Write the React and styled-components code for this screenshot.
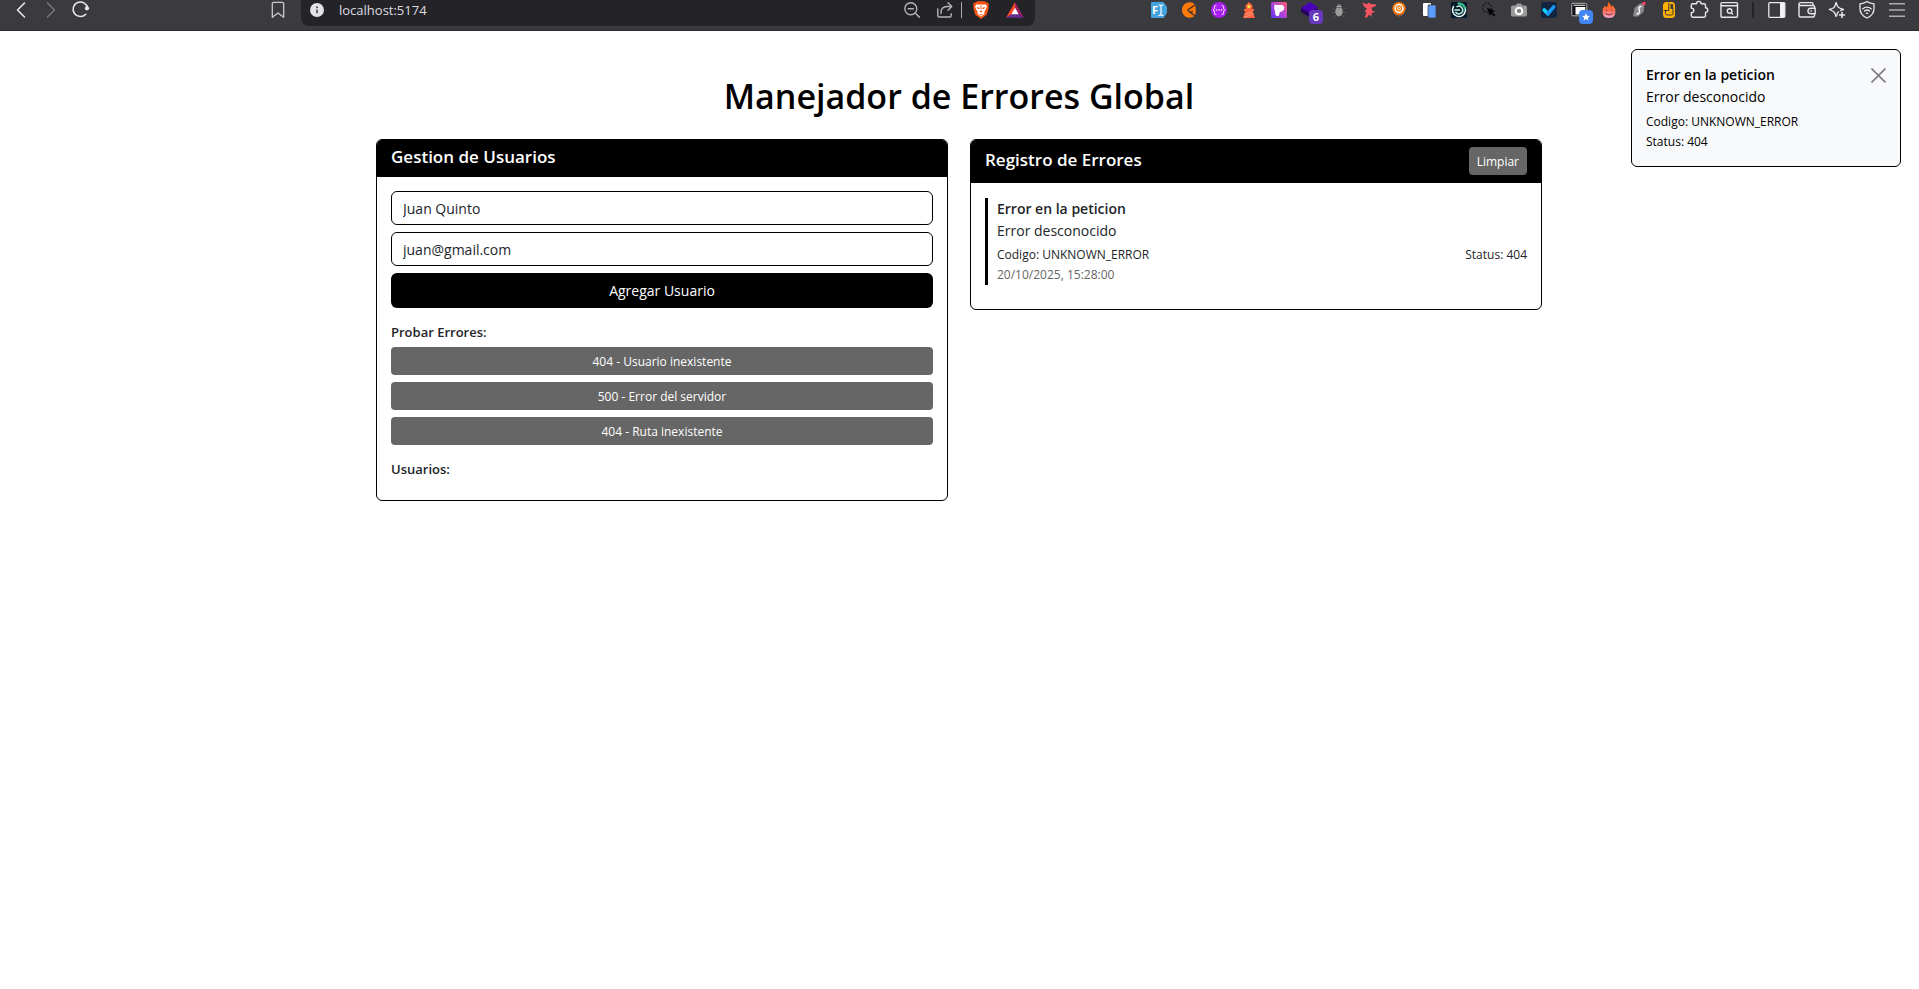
import React, { useState } from "react";
import styled, { createGlobalStyle } from "styled-components";

const GlobalStyle = createGlobalStyle`
  *, *::before, *::after { box-sizing: border-box; }
  body {
    margin: 0;
    background: #fff;
    color: #212529;
    font-family: "Segoe UI", "Open Sans", "Noto Sans", sans-serif;
    font-size: 14px;
    line-height: 22px;
  }
  button, input { font-family: inherit; }
  h1, h2, h3, p { margin: 0; }
`;

/* ---------- browser toolbar ---------- */

const Toolbar = styled.header`
  display: flex;
  align-items: flex-start;
  height: 31px;
  padding: 0 7px 0 6px;
  background: #3b3a3f;
  border-bottom: 1px solid #2c2b30;
`;

const ToolGroup = styled.div`
  display: flex;
  align-items: center;
  height: 20px;
  flex: none;
`;

const Spacer = styled.div`
  flex: ${(p) => p.$grow} 1 0;
`;

const ToolButton = styled.button`
  position: relative;
  display: flex;
  align-items: center;
  justify-content: center;
  width: ${(p) => p.$width || 30}px;
  height: 20px;
  padding: 0;
  border: 0;
  background: none;
  color: ${(p) => p.$color || "#e8e8ea"};
  svg { display: block; flex: none; overflow: visible; }
`;

const Badge = styled.span`
  position: absolute;
  left: ${(p) => p.$left}px;
  top: 10px;
  display: flex;
  align-items: center;
  justify-content: center;
  width: 14px;
  height: 14px;
  border-radius: 4px;
  background: ${(p) => p.$bg};
  color: #fff;
  font-size: 11px;
  font-weight: 700;
  line-height: 14px;
`;

const ToolDivider = styled.div`
  width: 2px;
  height: 16px;
  margin: 0 8px;
  background: #242328;
`;

const AddressBar = styled.div`
  display: flex;
  align-items: center;
  flex: 728 1 0;
  min-width: 0;
  height: 26px;
  margin-left: 8px;
  padding: 0 5px 6px 1px;
  border-radius: 0 0 8px 8px;
  background: #242328;
`;

const AddressInput = styled.input`
  flex: 1;
  min-width: 0;
  height: 20px;
  padding: 0 7px;
  border: 0;
  outline: 0;
  background: none;
  color: #dcdce0;
  font-size: 13px;
`;

const AddressDivider = styled.div`
  width: 1px;
  height: 16px;
  background: #a9a9ad;
`;

const Icon = ({ children, size = 16 }) => (
  <svg width={size} height={size} viewBox="0 0 16 16" fill="none" stroke="currentColor"
    strokeWidth="1.4" strokeLinecap="round" strokeLinejoin="round" aria-hidden="true">
    {children}
  </svg>
);

const BackIcon = () => <Icon><path d="M11.5 1 4.5 8l7 7" strokeWidth="1.6" /></Icon>;
const ForwardIcon = () => <Icon><path d="M4.5 1l7 7-7 7" /></Icon>;
const ReloadIcon = () => (
  <Icon>
    <path d="M12.8 12.2A7.3 7.3 0 1 1 14.6 6" strokeWidth="1.5" />
    <circle cx="14" cy="6.3" r="2.1" fill="currentColor" stroke="none" />
  </Icon>
);
const BookmarkIcon = () => <Icon><path d="M2.3 15.3V1.8Q2.3.3 3.8.3h8.4q1.5 0 1.5 1.5v13.5L8 11z" strokeWidth="1.3" /></Icon>;
const InfoIcon = () => (
  <Icon size={14}>
    <circle cx="8" cy="8" r="8" fill="#e3e3e6" stroke="none" />
    <path d="M8 7.4v4.2" stroke="#55545a" strokeWidth="2" strokeLinecap="butt" />
    <circle cx="8" cy="4.8" r="1.2" fill="#55545a" stroke="none" />
  </Icon>
);
const ZoomOutIcon = () => (
  <Icon><circle cx="6.8" cy="6.7" r="6" /><path d="M11.2 11l4.2 4.2M4.2 6.7h5.2" /></Icon>
);
const ShareIcon = () => (
  <Icon>
    <path d="M.8 7v6.5q0 1.5 1.5 1.5h10.4q1.5 0 1.5-1.5v-1.8" />
    <path d="M4 11.5V10q.3-5.2 6-5.5h4.5M11 .8l3.8 3.7L11 8.2" />
  </Icon>
);
const BraveIcon = () => (
  <svg width="16" height="18" viewBox="0 0 16 18" aria-hidden="true">
    <path d="M4.2.2h7.6l1.3 1.4 1.8-.2 1 2.4-.5 1.4.4 1.4-2.1 7.2L8 18l-5.7-4.2L.2 6.6.6 5.2.1 3.8l1-2.4 1.8.2z" fill="#fb5412" />
    <path d="M3.7 3.2l2.6.5L8 3.2l1.7.5 2.6-.5L14 5.6l-1.3 3-1.5 2.6.4 1.5L8 15.7l-3.6-3 .4-1.5-1.5-2.6L2 5.6z" fill="#fff" />
    <path d="M3.8 6l3 .7L6.3 8 4.9 8zM12.2 6l-3 .7.5 1.3 1.4 0zM6.4 10.3 8 9.5l1.6.8L8 11.5zM5.5 12.4l2.5 1.1 2.5-1.1L8 14.7zM7.6 4h.8v4.5h-.8z" fill="#fb5412" />
  </svg>
);
const BatIcon = () => (
  <svg width="18" height="16" viewBox="0 0 18 16" aria-hidden="true">
    <path d="M9 .3 0 15.7 6 12 9 6.5z" fill="#ff4724" />
    <path d="M9 .3v6.2l3.2 5.5 5.8 3.7z" fill="#9e1f63" />
    <path d="M0 15.7h18L12.2 12H5.8z" fill="#662d91" />
    <path d="M9 5.7l3.6 6.5H5.4z" fill="#fff" />
  </svg>
);
const FontIcon = () => (
  <Icon>
    <path d="M1 0h11.5L16 5v6l-3.5 5H1q-1 0-1-1V1q0-1 1-1z" fill="#43a3df" stroke="none" />
    <text x="1" y="12" fill="#fff" stroke="none" fontSize="11" fontWeight="700" fontFamily="Open Sans, sans-serif">F</text>
    <path d="M8 3q1.3 0 2 .8.7-.8 2-.8M8 13.5q1.3 0 2-.8.7.8 2 .8M10 4v8.5" stroke="#fff" strokeWidth="1.2" />
  </Icon>
);
const OrangeFaceIcon = () => (
  <Icon>
    <path d="M14 2.5A7.7 7.7 0 1 0 14 13.5Q15.5 8 14 2.5z" fill="#ff7a0a" stroke="none" />
    <path d="M13.5 3.2 6.8 8l2.5 2.5 2-1M9.3 10.5l4.2 3" stroke="#4b3326" strokeWidth="1.5" />
  </Icon>
);
const DotsIcon = () => (
  <Icon>
    <circle cx="8" cy="8" r="8" fill="#a91df0" stroke="none" />
    <path d="M5 3.5Q3.5 3.5 3.5 5v1.5L2.3 8l1.2 1.5V11q0 1.5 1.5 1.5M11 3.5q1.5 0 1.5 1.5v1.5L13.7 8l-1.2 1.5V11q0 1.5-1.5 1.5" stroke="#efcaff" strokeWidth="1.1" />
    <path d="M5.5 8h.1M8 8h.1M10.4 8h.1" stroke="#fff" strokeWidth="1.5" />
  </Icon>
);
const LighthouseIcon = () => (
  <Icon>
    <path d="M3.5 4.5 8 0l4.5 4.5zM4.8 4h6.5v4H4.8zM3 7h10v2H3zM4.5 9h7l2.5 7H2z" fill="#ff633b" stroke="none" />
    <circle cx="8" cy="4.5" r="1.7" fill="#ffe04a" stroke="none" />
    <path d="M4.5 12.3l6.5-2.5M3.5 15.3l8.7-3.4" stroke="#ff9a7d" strokeWidth="1" />
  </Icon>
);
const PIcon = () => (
  <Icon>
    <defs><linearGradient id="pgrad" x1="1" y1="0" x2="0" y2="1"><stop stopColor="#ff5f6d" /><stop offset=".5" stopColor="#b143dc" /><stop offset="1" stopColor="#5936f0" /></linearGradient></defs>
    <rect width="16" height="16" rx="1.5" fill="url(#pgrad)" stroke="none" />
    <path d="M3.5 2.5q4.5 1 7 .3 3.5 1 2.5 4.500-1 2.700-4.300 3L8 13.5q-2.5 1.3-3.5-.5L4 9.5Q2.5 6 3.5 2.500z" fill="#fff" stroke="none" />
    <path d="M5.5 5.3l2 2" stroke="#e3ceff" strokeWidth="1" />
  </Icon>
);
const CubeIcon = () => (
  <Icon>
    <path d="M9 0l7.5 5-8 6L0 6z" fill="#4a00b8" stroke="none" />
    <path d="M0 6l8.5 5v4L0 10z" fill="#24005f" stroke="none" />
    <path d="M16.5 5v4l-8 6v-4z" fill="#350089" stroke="none" />
  </Icon>
);
const BugIcon = () => (
  <Icon>
    <path d="M2 6.5l3 1.5M14 6.5 11 8M1.5 10.5H5m6 0h3.5M3 15l2.5-2M13 15l-2.5-2" stroke="#55555a" strokeWidth=".9" />
    <ellipse cx="8" cy="9.5" rx="3.6" ry="5" fill="#9b9b9b" stroke="none" />
    <circle cx="8" cy="4" r="2.3" fill="#646468" stroke="none" />
    <path d="M6 4.5q2-1 4 0" stroke="#ddd" strokeWidth=".8" />
  </Icon>
);
const RunnerIcon = () => (
  <Icon>
    <path d="M1.5.5l4 1.7L8 .5l2.2 1.7 4-.2 1 2-3.2 1-1.5 1 .8 3 3 .5-2.3 1.3-1.5.2.3 4-2.6-2.5L6 15.5H3.5l2-4.7L3.5 9.5 6 6.7 3.5 5 2 2.5z" fill="#f25462" stroke="none" />
  </Icon>
);
const DiscIcon = () => (
  <Icon>
    <path d="M2.8 12.5 8 15.5l5.2-3z" fill="#6d5039" stroke="none" />
    <circle cx="8" cy="6.5" r="6.6" fill="#f5790b" stroke="none" />
    <circle cx="8" cy="6.5" r="3.9" stroke="#fff" strokeWidth="1.5" />
    <circle cx="8" cy="6.5" r="1.5" fill="#f5790b" stroke="#ffe3c8" strokeWidth="1.2" />
  </Icon>
);
const DevicesIcon = () => (
  <Icon>
    <rect x="2" y="1" width="8" height="13" rx="1" fill="#fff" stroke="none" />
    <rect x="7" y="3" width="8" height="13" rx="1" fill="#5c9cf8" stroke="#3b3a3f" strokeWidth=".7" />
  </Icon>
);
const SpiralIcon = () => (
  <Icon>
    <rect width="16" height="16" fill="#07192a" stroke="none" />
    <path d="M2.5 4.5a6.5 6.5 0 1 0 5-3" stroke="#eafff8" strokeWidth="1.5" />
    <path d="M7.5 1.5a6.5 6.5 0 0 1 6.3 5" stroke="#24c58d" strokeWidth="1.8" />
    <path d="M4 8h4.5M6 4.7a3.8 3.8 0 1 1-1.2 5.6" stroke="#bff6e2" strokeWidth="1.5" />
  </Icon>
);
const ClickIcon = () => (
  <Icon>
    <circle cx="6" cy="5.8" r="4.5" stroke="#151518" strokeWidth="1.5" strokeDasharray="1.5 1.6" strokeLinecap="butt" />
    <path d="M6 5.8l8 3.2-2.7 1.3 3 3-1.2 1.2-3-3L8.800 14z" fill="#000" stroke="none" />
  </Icon>
);
const CameraIcon = () => (
  <Icon>
    <path d="M1.5 3.5h3L6 1.5h4l1.5 2h3q1.5 0 1.5 1.5v8q0 1.5-1.5 1.5h-13Q0 14.5 0 13V5q0-1.5 1.5-1.5z" fill="#99999b" stroke="none" />
    <circle cx="8" cy="9" r="3.3" fill="#858588" stroke="#fff" strokeWidth="2" />
  </Icon>
);
const CheckIcon = () => (
  <Icon>
    <rect width="16" height="16" rx="2" fill="#142542" stroke="none" />
    <path d="M3.2 8l3.7 3.8" stroke="#19d3ff" strokeWidth="3.6" />
    <path d="M7 11.5l5.7-6.7" stroke="#159bf8" strokeWidth="3.6" />
  </Icon>
);
const WindowIcon = () => (
  <Icon>
    <rect x=".8" y="1.3" width="15" height="12.5" rx="1" fill="#111" stroke="#b5b5b8" strokeWidth="1" />
    <path d="M2.5 2.8h11.8v1H2.5zM4.5 5h9.8v7.5H4.5z" fill="#fff" stroke="none" />
  </Icon>
);
const FlameIcon = () => (
  <Icon>
    <defs><linearGradient id="flame" x1="0" y1="0" x2="0" y2="1"><stop stopColor="#ff6a00" /><stop offset=".5" stopColor="#ff6945" /><stop offset="1" stopColor="#f6a5d1" /></linearGradient></defs>
    <path d="M7.5-.3Q9 1.5 10.5 5L12 3q.3 2 2.2 3.7 1.5 9.3-6.2 9.3T1.8 6.7Q3.3 5.5 3.5 3.5L5.5 5.5Q7.5 3 7.5-.3z" fill="url(#flame)" stroke="none" />
    <path d="M5.5 8v.5M10.5 8v.5M4.5 11.5q3.500 3 7 0" stroke="#7d2c49" strokeWidth="1" />
  </Icon>
);
const PenIcon = () => (
  <Icon>
    <path d="M2 14.5 3.5 6 9 1.5h4.5L12.5 10 7 14.5z" fill="#8b8b8e" stroke="none" />
    <path d="M10 4.5Q8 4.5 7.8 6.5q1.2 1.5.5 4-.5 1.5-2.3 1.5" stroke="#fff" strokeWidth="1.3" />
    <circle cx="13" cy="1.5" r="1.7" fill="#fb405e" stroke="none" />
  </Icon>
);
const MouseIcon = () => (
  <Icon>
    <rect x="2" y="0" width="12" height="16" rx="3.5" fill="#ffb000" stroke="none" />
    <path d="M9.500 2H11q1.200 0 1.200 1.200V7H9.500z" fill="#3b3a3f" stroke="none" />
    <path d="M7.800 1v7.500H3M4.500 9v2.500q0 1.500 1.500 1.500h4.500q1.500 0 1.500-1.500V7" stroke="#3b3a3f" strokeWidth="1" />
  </Icon>
);
const PuzzleIcon = () => (
  <Icon><path d="M5.5 1.8Q5.5-.6 7.8-.6t2.3 2.4h3q1.4 0 1.4 1.4v2.5q2.3.3 2.3 2.4t-2.3 2.4v3.3q0 1.4-1.4 1.4H1.7q-1.4 0-1.4-1.4v-3q2.500-.2 2.500-2.300T.3 6V3.200Q.3 1.800 1.700 1.800z" /></Icon>
);
const SearchWindowIcon = () => (
  <Icon><rect x="0" y=".6" width="16.5" height="14.7" rx="1.2" /><path d="M.5 3.7h15.5" /><circle cx="8.6" cy="9" r="2.3" /><path d="M10.3 10.8l1.2 1.2" /></Icon>
);
const SidebarIcon = () => (
  <Icon><rect x="-.2" y=".7" width="16" height="14.6" rx="1" strokeWidth="1.3" /><path d="M11 1h4.7v14H11z" fill="#f1f1f3" stroke="none" /></Icon>
);
const WalletIcon = () => (
  <Icon><path d="M15.5 6V4.500Q15.500 3.500 14 3.500H2Q0 3.500 0 2q0-1.400 1.500-1.400h11.500q1 0 1 1.400v1.400M0 2v11.500q0 1.500 1.500 1.500H14q1.500 0 1.500-1.500V12" /><path d="M16.2 6.3v5.400h-4.500Q9 11.500 9 9t2.700-2.700z" /><path d="M12 9h.5" /></Icon>
);
const SparkIcon = () => (
  <Icon><path d="M9.5 10Q8.5 10 7.8 13l-.7 1.5Q6 11 5 10T.3 7.5Q4 6.5 5 5.5T7.1.5Q8.2 4 9.2 5.2T14.5 7.5q-2 .4-3 1" strokeWidth="1.3" /><path d="M13 10.5v5M10.500 13h5" strokeWidth="1.6" /></Icon>
);
const ShieldIcon = () => (
  <Icon><path d="M8-.5Q11 1.5 15 1.8v4.7Q15 13 8 16 1 13 1 6.5V1.8Q5 1.5 8-.5z" strokeWidth="1.3" /><path d="M3.8 6.8Q8 3.5 12.2 6.8M5.5 9Q8 7 10.5 9M7.5 11.3h1" /></Icon>
);
const MenuIcon = () => <Icon><path d="M0 1.8h16M0 8h16M0 14.2h16" strokeLinecap="butt" stroke="#aeaeb1" strokeWidth="1.5" /></Icon>;

const extensions = [
  ["Fuentes", FontIcon], ["Cookies", OrangeFaceIcon], ["JSON", DotsIcon], ["Lighthouse", LighthouseIcon],
  ["Pesticide", PIcon], ["Bloques", CubeIcon, "6"], ["Depurador", BugIcon], ["Corredor", RunnerIcon],
  ["Disco", DiscIcon], ["Dispositivos", DevicesIcon], ["Espiral", SpiralIcon], ["Selector", ClickIcon],
  ["Captura", CameraIcon], ["Tareas", CheckIcon], ["Ventanas", WindowIcon, "star"], ["Llama", FlameIcon],
  ["Script", PenIcon], ["Mouse", MouseIcon], ["Extensiones", PuzzleIcon], ["Buscar pestañas", SearchWindowIcon],
];

const browserTools = [
  ["Barra lateral", SidebarIcon], ["Cartera", WalletIcon], ["Asistente", SparkIcon], ["VPN", ShieldIcon], ["Menú", MenuIcon],
];

const StarGlyph = () => (
  <svg width="8" height="8" viewBox="0 0 10 10" aria-hidden="true">
    <path d="M5 0l1.4 3.3 3.6.3-2.7 2.3.8 3.6L5 7.6 1.9 9.5l.8-3.6L0 3.6l3.6-.3z" fill="#fff" />
  </svg>
);

function BrowserToolbar() {
  const [url, setUrl] = useState("localhost:5174");
  return (
    <Toolbar>
      <ToolGroup>
        <ToolButton aria-label="Atrás"><BackIcon /></ToolButton>
        <ToolButton aria-label="Adelante" $color="#7b7a80"><ForwardIcon /></ToolButton>
        <ToolButton aria-label="Recargar"><ReloadIcon /></ToolButton>
      </ToolGroup>
      <Spacer $grow={167} />
      <ToolGroup>
        <ToolButton aria-label="Guardar marcador" $color="#c9c9cc"><BookmarkIcon /></ToolButton>
      </ToolGroup>
      <AddressBar>
        <ToolButton aria-label="Información del sitio"><InfoIcon /></ToolButton>
        <AddressInput aria-label="Dirección" value={url} onChange={(e) => setUrl(e.target.value)} />
        <ToolButton aria-label="Zoom" $width={34} $color="#b4b4b8"><ZoomOutIcon /></ToolButton>
        <ToolButton aria-label="Compartir" $width={32} $color="#b4b4b8"><ShareIcon /></ToolButton>
        <AddressDivider />
        <ToolButton aria-label="Brave Shields" $width={38}><BraveIcon /></ToolButton>
        <ToolButton aria-label="Brave Rewards"><BatIcon /></ToolButton>
      </AddressBar>
      <Spacer $grow={109} />
      <ToolGroup>
        {extensions.map(([name, Glyph, badge]) => (
          <ToolButton key={name} aria-label={name}>
            <Glyph />
            {badge === "6" && <Badge $bg="#6639bd" $left={15}>6</Badge>}
            {badge === "star" && <Badge $bg="#4285f4" $left={15}><StarGlyph /></Badge>}
          </ToolButton>
        ))}
        <ToolDivider />
        {browserTools.map(([name, Glyph]) => (
          <ToolButton key={name} aria-label={name}><Glyph /></ToolButton>
        ))}
      </ToolGroup>
    </Toolbar>
  );
}

/* ---------- page ---------- */

const Page = styled.main`
  max-width: 1189px;
  margin: 0 auto;
  padding: 42px 12px 42px 11px;
`;

const Title = styled.h1`
  margin-bottom: 20px;
  color: #000;
  font-size: 34px;
  font-weight: 600;
  line-height: 46px;
  text-align: center;
`;

const Columns = styled.div`
  display: grid;
  grid-template-columns: repeat(2, minmax(0, 1fr));
  align-items: start;
  gap: 22px;
`;

const Card = styled.section`
  overflow: hidden;
  border: 1px solid #000;
  border-radius: 6px;
`;

const CardHeader = styled.div`
  display: flex;
  align-items: center;
  justify-content: space-between;
  padding: 7px 14px 8px;
  background: #000;
  color: #fff;
`;

const CardTitle = styled.h2`
  padding-bottom: 2px;
  font-size: 17px;
  font-weight: 600;
  line-height: 20px;
`;

const CardBody = styled.div`
  padding: 14px 14px 16px;
`;

const Stack = styled.form`
  display: flex;
  flex-direction: column;
  gap: 7px;
`;

const ButtonStack = styled.div`
  display: flex;
  flex-direction: column;
  gap: 7px;
`;

const TextField = styled.input`
  width: 100%;
  height: 34px;
  padding: 0 11px;
  border: 1px solid #000;
  border-radius: 6px;
  outline: 0;
  background: #fff;
  color: #212529;
  font-size: 14px;
`;

const PrimaryButton = styled.button`
  height: 35px;
  border: 0;
  border-radius: 6px;
  background: #000;
  color: #fff;
  font-size: 14px;
`;

const SmallButton = styled.button`
  height: 28px;
  padding: 0 8px;
  border: 0;
  border-radius: 4px;
  background: #666;
  color: #fff;
  font-size: 12px;
`;

const SectionLabel = styled.h3`
  margin: 14px 0 5px;
  font-size: 13px;
  font-weight: 600;
  line-height: 20px;
`;

const LogEntry = styled.article`
  margin: 1px 0 8px;
  padding-left: 9px;
  border-left: 3px solid #000;
  color: #212529;
`;

const ErrorTitle = styled.h3`
  font-size: 14px;
  font-weight: 600;
  line-height: 22px;
`;

const ErrorText = styled.p`
  font-size: 14px;
  line-height: 21px;
`;

const Meta = styled.p`
  display: flex;
  justify-content: space-between;
  color: ${(p) => (p.$muted ? "#666" : "inherit")};
  font-size: 12px;
  line-height: ${(p) => p.$line || 20}px;
`;

const MetaGroup = styled.div`
  padding-top: ${(p) => p.$top}px;
`;

const Toast = styled.aside`
  position: fixed;
  top: 49px;
  right: 18px;
  display: flex;
  align-items: flex-start;
  justify-content: space-between;
  width: 270px;
  padding: 14px;
  border: 1px solid #000;
  border-radius: 6px;
  background: #f8f9fb;
  color: #000;
`;

const CloseButton = styled.button`
  display: flex;
  padding: 4px 0;
  border: 0;
  background: none;
  color: #7c7c7e;
`;

const error = {
  title: "Error en la peticion",
  message: "Error desconocido",
  code: "Codigo: UNKNOWN_ERROR",
  status: "Status: 404",
  date: "20/10/2025, 15:28:00",
};

const tests = ["404 - Usuario inexistente", "500 - Error del servidor", "404 - Ruta inexistente"];

export default function App() {
  const [name, setName] = useState("Juan Quinto");
  const [email, setEmail] = useState("juan@gmail.com");
  return (
    <>
      <GlobalStyle />
      <BrowserToolbar />
      <Page>
        <Title>Manejador de Errores Global</Title>
        <Columns>
          <Card>
            <CardHeader><CardTitle>Gestion de Usuarios</CardTitle></CardHeader>
            <CardBody>
              <Stack onSubmit={(e) => e.preventDefault()}>
                <TextField aria-label="Nombre" value={name} onChange={(e) => setName(e.target.value)} />
                <TextField aria-label="Email" type="email" value={email} onChange={(e) => setEmail(e.target.value)} />
                <PrimaryButton type="submit">Agregar Usuario</PrimaryButton>
              </Stack>
              <SectionLabel>Probar Errores:</SectionLabel>
              <ButtonStack>
                {tests.map((t) => <SmallButton key={t} type="button">{t}</SmallButton>)}
              </ButtonStack>
              <SectionLabel>Usuarios:</SectionLabel>
            </CardBody>
          </Card>
          <Card>
            <CardHeader>
              <CardTitle>Registro de Errores</CardTitle>
              <SmallButton type="button">Limpiar</SmallButton>
            </CardHeader>
            <CardBody>
              <LogEntry>
                <ErrorTitle>{error.title}</ErrorTitle>
                <ErrorText>{error.message}</ErrorText>
                <MetaGroup $top={3}>
                  <Meta $line={21}><span>{error.code}</span><span>{error.status}</span></Meta>
                  <Meta $muted><time>{error.date}</time></Meta>
                </MetaGroup>
              </LogEntry>
            </CardBody>
          </Card>
        </Columns>
      </Page>
      <Toast role="alert">
        <div>
          <ErrorTitle>{error.title}</ErrorTitle>
          <ErrorText>{error.message}</ErrorText>
          <MetaGroup $top={5}>
            <Meta>{error.code}</Meta>
            <Meta>{error.status}</Meta>
          </MetaGroup>
        </div>
        <CloseButton aria-label="Cerrar">
          <svg width="15" height="15" viewBox="0 0 15 15" fill="none" stroke="currentColor" strokeWidth="1.6" aria-hidden="true">
            <path d="M.5.5l14 14M14.5.5l-14 14" />
          </svg>
        </CloseButton>
      </Toast>
    </>
  );
}
